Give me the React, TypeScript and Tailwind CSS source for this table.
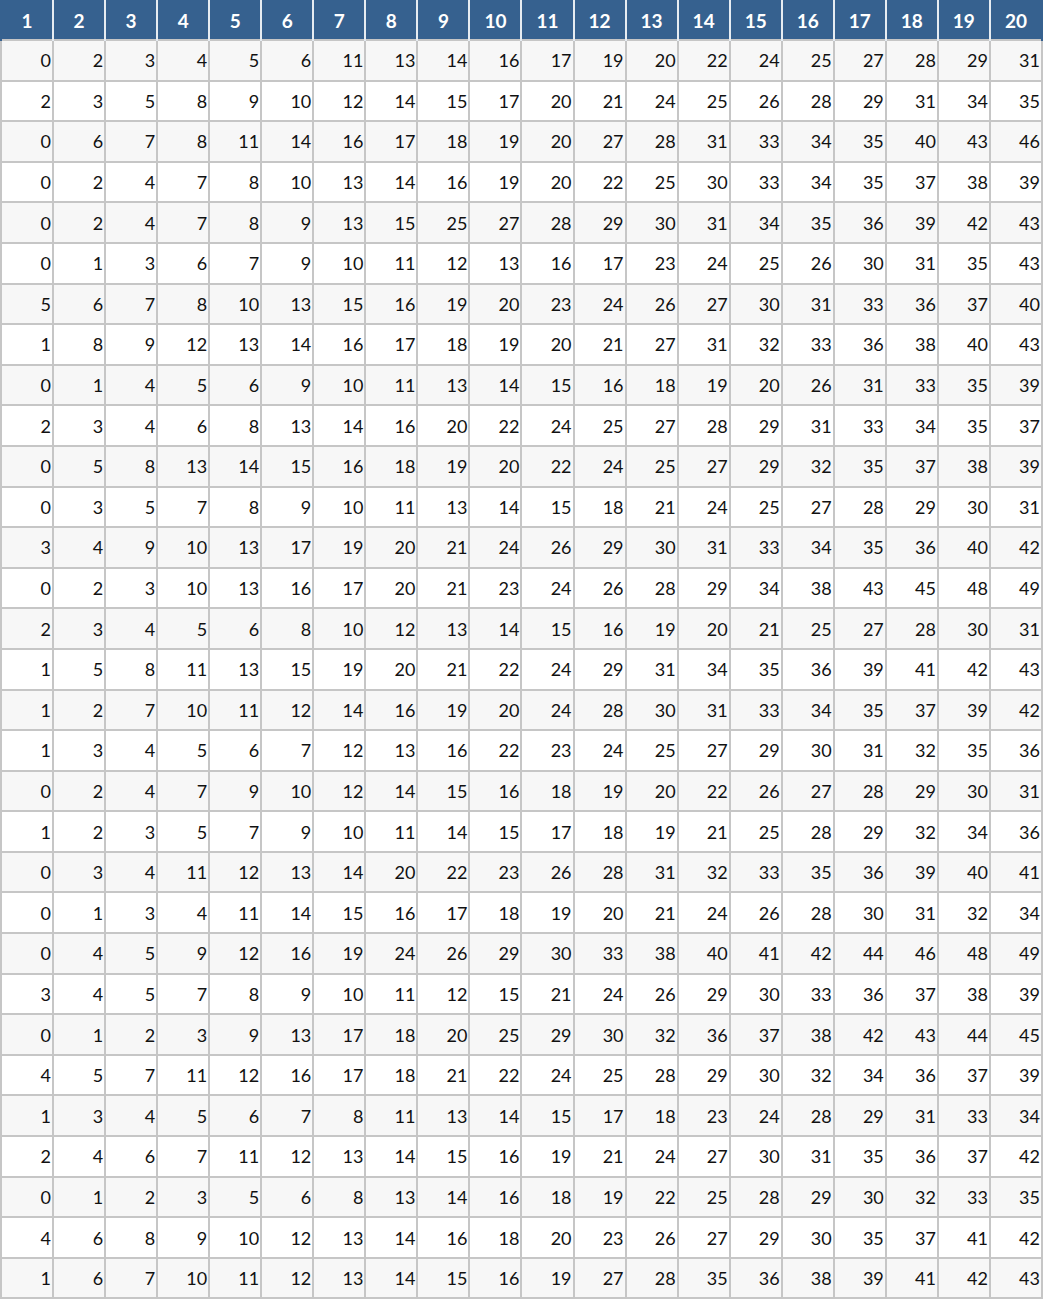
import React from "react";

const rows: number[][] = [
  [0, 2, 3, 4, 5, 6, 11, 13, 14, 16, 17, 19, 20, 22, 24, 25, 27, 28, 29, 31],
  [2, 3, 5, 8, 9, 10, 12, 14, 15, 17, 20, 21, 24, 25, 26, 28, 29, 31, 34, 35],
  [0, 6, 7, 8, 11, 14, 16, 17, 18, 19, 20, 27, 28, 31, 33, 34, 35, 40, 43, 46],
  [0, 2, 4, 7, 8, 10, 13, 14, 16, 19, 20, 22, 25, 30, 33, 34, 35, 37, 38, 39],
  [0, 2, 4, 7, 8, 9, 13, 15, 25, 27, 28, 29, 30, 31, 34, 35, 36, 39, 42, 43],
  [0, 1, 3, 6, 7, 9, 10, 11, 12, 13, 16, 17, 23, 24, 25, 26, 30, 31, 35, 43],
  [5, 6, 7, 8, 10, 13, 15, 16, 19, 20, 23, 24, 26, 27, 30, 31, 33, 36, 37, 40],
  [1, 8, 9, 12, 13, 14, 16, 17, 18, 19, 20, 21, 27, 31, 32, 33, 36, 38, 40, 43],
  [0, 1, 4, 5, 6, 9, 10, 11, 13, 14, 15, 16, 18, 19, 20, 26, 31, 33, 35, 39],
  [2, 3, 4, 6, 8, 13, 14, 16, 20, 22, 24, 25, 27, 28, 29, 31, 33, 34, 35, 37],
  [0, 5, 8, 13, 14, 15, 16, 18, 19, 20, 22, 24, 25, 27, 29, 32, 35, 37, 38, 39],
  [0, 3, 5, 7, 8, 9, 10, 11, 13, 14, 15, 18, 21, 24, 25, 27, 28, 29, 30, 31],
  [3, 4, 9, 10, 13, 17, 19, 20, 21, 24, 26, 29, 30, 31, 33, 34, 35, 36, 40, 42],
  [0, 2, 3, 10, 13, 16, 17, 20, 21, 23, 24, 26, 28, 29, 34, 38, 43, 45, 48, 49],
  [2, 3, 4, 5, 6, 8, 10, 12, 13, 14, 15, 16, 19, 20, 21, 25, 27, 28, 30, 31],
  [1, 5, 8, 11, 13, 15, 19, 20, 21, 22, 24, 29, 31, 34, 35, 36, 39, 41, 42, 43],
  [1, 2, 7, 10, 11, 12, 14, 16, 19, 20, 24, 28, 30, 31, 33, 34, 35, 37, 39, 42],
  [1, 3, 4, 5, 6, 7, 12, 13, 16, 22, 23, 24, 25, 27, 29, 30, 31, 32, 35, 36],
  [0, 2, 4, 7, 9, 10, 12, 14, 15, 16, 18, 19, 20, 22, 26, 27, 28, 29, 30, 31],
  [1, 2, 3, 5, 7, 9, 10, 11, 14, 15, 17, 18, 19, 21, 25, 28, 29, 32, 34, 36],
  [0, 3, 4, 11, 12, 13, 14, 20, 22, 23, 26, 28, 31, 32, 33, 35, 36, 39, 40, 41],
  [0, 1, 3, 4, 11, 14, 15, 16, 17, 18, 19, 20, 21, 24, 26, 28, 30, 31, 32, 34],
  [0, 4, 5, 9, 12, 16, 19, 24, 26, 29, 30, 33, 38, 40, 41, 42, 44, 46, 48, 49],
  [3, 4, 5, 7, 8, 9, 10, 11, 12, 15, 21, 24, 26, 29, 30, 33, 36, 37, 38, 39],
  [0, 1, 2, 3, 9, 13, 17, 18, 20, 25, 29, 30, 32, 36, 37, 38, 42, 43, 44, 45],
  [4, 5, 7, 11, 12, 16, 17, 18, 21, 22, 24, 25, 28, 29, 30, 32, 34, 36, 37, 39],
  [1, 3, 4, 5, 6, 7, 8, 11, 13, 14, 15, 17, 18, 23, 24, 28, 29, 31, 33, 34],
  [2, 4, 6, 7, 11, 12, 13, 14, 15, 16, 19, 21, 24, 27, 30, 31, 35, 36, 37, 42],
  [0, 1, 2, 3, 5, 6, 8, 13, 14, 16, 18, 19, 22, 25, 28, 29, 30, 32, 33, 35],
  [4, 6, 8, 9, 10, 12, 13, 14, 16, 18, 20, 23, 26, 27, 29, 30, 35, 37, 41, 42],
  [1, 6, 7, 10, 11, 12, 13, 14, 15, 16, 19, 27, 28, 35, 36, 38, 39, 41, 42, 43],
];

const headers = Array.from({ length: 20 }, (_, i) => i + 1);

export default function App() {
  return (
    <div className="bg-white font-['Lato',sans-serif]">
      <table className="w-[1043px] table-fixed border-collapse">
        <thead>
          <tr className="h-[40px] bg-[#36618f]">
            {headers.map((h) => (
              <th
                key={h}
                className="border-x-2 border-x-[#e6ecf2] p-0 pt-[3px] text-center text-[19px] font-bold text-white first:border-l-[#36618f] last:border-r-[#36618f]"
              >
                {h}
              </th>
            ))}
          </tr>
        </thead>
        <tbody>
          {rows.map((row, i) => (
            <tr
              key={i}
              className={`h-[40.6px] ${i % 2 === 0 ? "bg-[#f7f7f7]" : "bg-white"}`}
            >
              {row.map((n, j) => (
                <td
                  key={j}
                  className="border-2 border-[#c6c6c6] p-0 pr-[1px] text-right text-[18px] leading-none text-[#111]"
                >
                  {n}
                </td>
              ))}
            </tr>
          ))}
        </tbody>
      </table>
    </div>
  );
}
